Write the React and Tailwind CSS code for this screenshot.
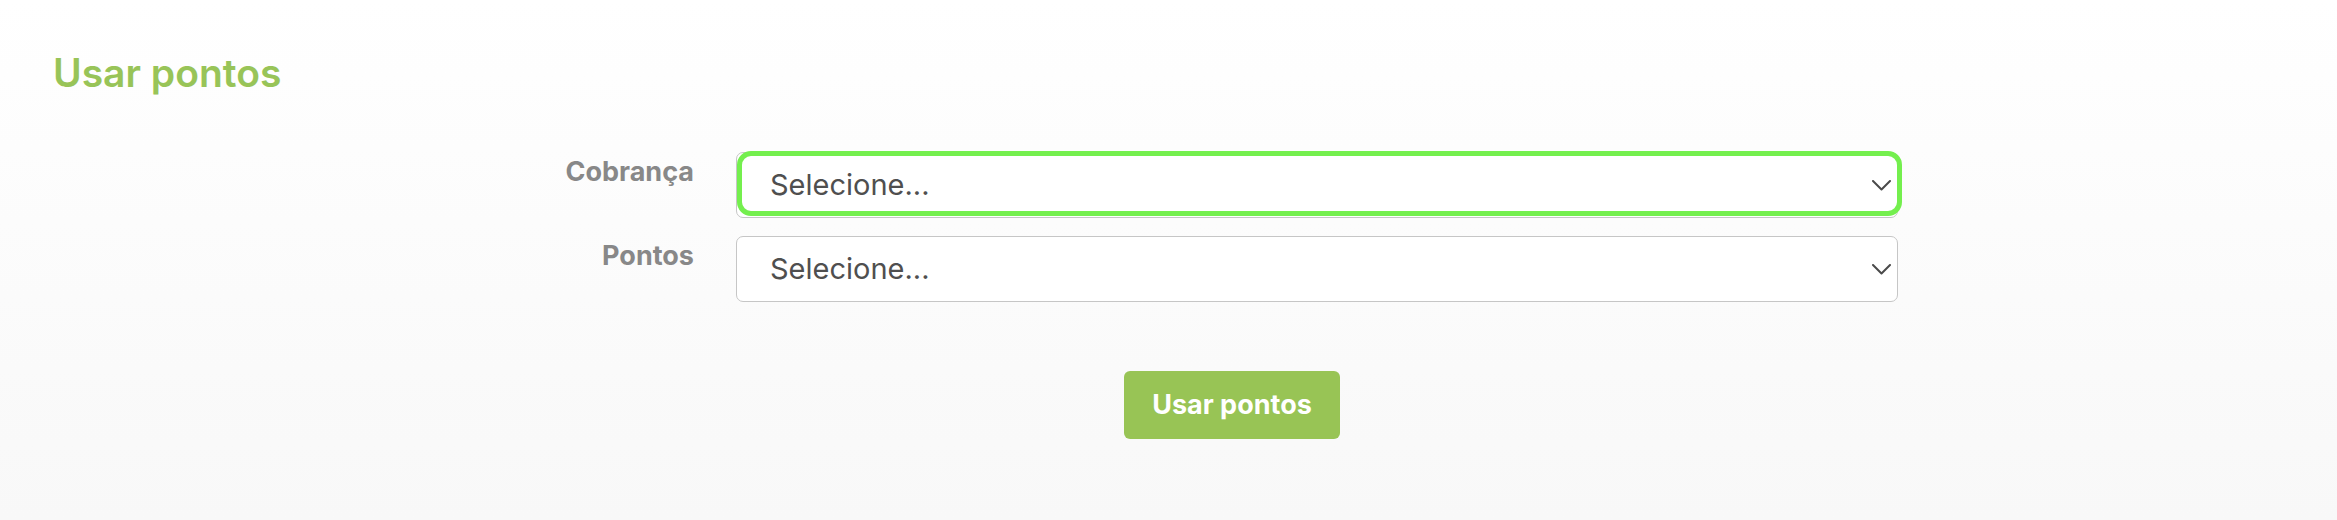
import React from 'react';

const Chevron = () => (
    <svg width="19" height="11" viewBox="0 0 19 11" fill="none" className="shrink-0">
        <polyline points="1,1 9.5,9.5 18,1" stroke="#4a4a4a" strokeWidth="2" strokeLinecap="round" strokeLinejoin="round" />
    </svg>
);

const SelectBox = ({ focused = false }) => (
    <div className="relative w-[1162px] h-[66px]">
        <div className="h-full rounded-[7px] border-[1.5px] border-[#c6c6c6] bg-white flex items-center justify-between pl-[33px] pr-[6px]">
            <span className="text-[29px] text-[#4f4f4f]">Selecione...</span>
            <Chevron />
        </div>
        {focused && (
            <div className="absolute left-[1px] top-[-1px] right-[-4px] bottom-[2px] rounded-[14px] border-[5px] border-[#74ef4e] pointer-events-none" />
        )}
    </div>
);

const FieldRow = ({ label, focused }) => (
    <div className="flex items-start gap-[42px]">
        <label className="w-[200px] text-right text-[27px] leading-[40px] font-bold text-[#888888]">{label}</label>
        <SelectBox focused={focused} />
    </div>
);

export default function App() {
    return (
        <div className="min-h-[520px] w-full bg-gradient-to-b from-white to-[#f8f8f8] font-['Inter','Liberation_Sans',sans-serif]">
            <h1 className="pt-[49px] pl-[53px] text-[39px] leading-[48px] font-semibold text-[#98c458]">Usar pontos</h1>

            {/* Formulário */}
            <div className="ml-[494px] w-[1476px] mt-[55px] flex flex-col">
                <div className="flex flex-col gap-[18px]">
                    <FieldRow label="Cobrança" focused />
                    <FieldRow label="Pontos" />
                </div>
                <div className="flex justify-center mt-[69px]">
                    <button className="h-[68px] px-[28px] rounded-[6px] bg-[#98c455] text-white text-[27px] font-bold flex items-center">
                        Usar pontos
                    </button>
                </div>
            </div>
        </div>
    );
}
